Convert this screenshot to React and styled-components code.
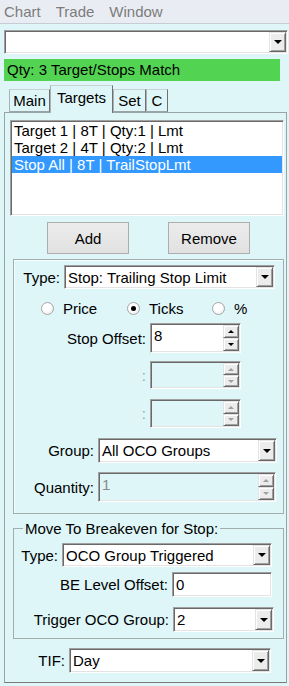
import React from "react";
import styled, { createGlobalStyle } from "styled-components";

const GlobalStyle = createGlobalStyle`
  html, body {
    margin: 0;
    padding: 0;
  }
  body {
    background: #def6f8;
    font-family: "Liberation Sans", Arial, sans-serif;
    font-size: 15px;
    color: #000;
  }
`;

const sunken = `
  border: 1px solid;
  border-color: #a0a0a0 #ffffff #ffffff #a0a0a0;
  box-shadow: inset 1px 1px #696969, inset -1px -1px #e3e3e3;
`;

const raised = `
  border: 1px solid;
  border-color: #e3e3e3 #696969 #696969 #e3e3e3;
  box-shadow: inset 1px 1px #ffffff, inset -1px -1px #a0a0a0;
`;

export default function App() {
  return (
    <Window>
      <GlobalStyle />
      <MenuBar>
        <span>Chart</span>
        <span>Trade</span>
        <span>Window</span>
      </MenuBar>

      <Body>
        <Combo w={284} h={24} value="" />
        <StatusBar>Qty: 3 Target/Stops Match</StatusBar>

        <TabStrip>
          <Tab $w={41}>Main</Tab>
          <Tab $w={63} $active>Targets</Tab>
          <Tab $w={33}>Set</Tab>
          <Tab $w={22}>C</Tab>
        </TabStrip>

        <TabPage>
          <ListBox>
            <ListItem>Target 1 | 8T | Qty:1 | Lmt</ListItem>
            <ListItem>Target 2 | 4T | Qty:2 | Lmt</ListItem>
            <ListItem $selected>Stop All | 8T | TrailStopLmt</ListItem>
          </ListBox>

          <ButtonRow>
            <Button>Add</Button>
            <Button>Remove</Button>
          </ButtonRow>

          <GroupBox>
            <Field $lw={46} $mt={5}>
              <Label>Type:</Label>
              <Combo w={211} h={24} value="Stop: Trailing Stop Limit" />
            </Field>

            <RadioRow>
              <RadioItem>
                <RadioDot />
                <span>Price</span>
              </RadioItem>
              <RadioItem>
                <RadioDot $on />
                <span>Ticks</span>
              </RadioItem>
              <RadioItem>
                <RadioDot />
                <span>%</span>
              </RadioItem>
            </RadioRow>

            <Field $lw={132} $mt={7}>
              <Label>Stop Offset:</Label>
              <Spin w={91} h={30} value="8" />
            </Field>
            <Field $lw={132} $mt={8}>
              <Label $disabled>:</Label>
              <Spin w={91} h={28} value="" disabled />
            </Field>
            <Field $lw={132} $mt={10}>
              <Label $disabled>:</Label>
              <Spin w={91} h={29} value="" disabled />
            </Field>
            <Field $lw={80} $mt={10}>
              <Label>Group:</Label>
              <Combo w={179} h={25} value="All OCO Groups" />
            </Field>
            <Field $lw={80} $mt={9}>
              <Label>Quantity:</Label>
              <Spin w={178} h={30} value="1" disabled />
            </Field>
          </GroupBox>

          <FieldSet>
            <Legend>Move To Breakeven for Stop:</Legend>
            <Field $lw={44} $mt={6}>
              <Label>Type:</Label>
              <Combo w={210} h={24} value="OCO Group Triggered" />
            </Field>
            <Field $lw={154} $mt={5}>
              <Label>BE Level Offset:</Label>
              <TextBox $w={100} $h={25}>0</TextBox>
            </Field>
            <Field $lw={155} $mt={10}>
              <Label>Trigger OCO Group:</Label>
              <Combo w={101} h={25} value="2" />
            </Field>
          </FieldSet>

          <Field $lw={60} $mt={9}>
            <Label>TIF:</Label>
            <Combo w={202} h={25} value="Day" />
          </Field>
        </TabPage>
      </Body>
    </Window>
  );
}

function Combo({ w, h, value }) {
  return (
    <ComboBox $w={w} $h={h}>
      <ComboText>{value}</ComboText>
      <DropButton>
        <Arrow />
      </DropButton>
    </ComboBox>
  );
}

function Spin({ w, h, value, disabled }) {
  return (
    <SpinBox $w={w} $h={h} $disabled={disabled}>
      <SpinText $disabled={disabled}>{value}</SpinText>
      <SpinButtons>
        <SpinHalf>
          <SmallArrow $up $disabled={disabled} />
        </SpinHalf>
        <SpinHalf>
          <SmallArrow $disabled={disabled} />
        </SpinHalf>
      </SpinButtons>
    </SpinBox>
  );
}

const Window = styled.div`
  width: 289px;
  height: 686px;
  overflow: hidden;
  background: #def6f8;
  display: flex;
  flex-direction: column;
`;

const MenuBar = styled.div`
  flex: none;
  height: 23px;
  display: flex;
  gap: 15px;
  padding-left: 4px;
  background: #e9edf3;
  border-bottom: 1px solid #c6ccd4;
  color: #7c7c7c;
  line-height: 23px;
`;

const Body = styled.div`
  display: flex;
  flex-direction: column;
  padding: 6px 1px 0 4px;
`;

const StatusBar = styled.div`
  width: 276px;
  height: 22px;
  margin-top: 5px;
  background: #52d452;
  line-height: 22px;
  padding-left: 3px;
  box-sizing: border-box;
`;

const TabStrip = styled.div`
  display: flex;
  align-items: flex-end;
  height: 27px;
  margin-top: 4px;
  padding-left: 5px;
`;

const Tab = styled.div`
  position: relative;
  z-index: ${(p) => (p.$active ? 1 : 0)};
  width: ${(p) => p.$w}px;
  height: ${(p) => (p.$active ? 28 : 23)}px;
  margin-bottom: ${(p) => (p.$active ? -1 : 0)}px;
  box-sizing: border-box;
  display: flex;
  align-items: center;
  justify-content: center;
  padding-bottom: ${(p) => (p.$active ? 4 : 0)}px;
  background: #def6f8;
  border: 1px solid #a9b3b5;
  border-right-color: #707070;
  border-bottom: ${(p) => (p.$active ? "none" : "1px solid #9aa4a6")};
  border-top-color: #c8d2d4;
`;

const TabPage = styled.div`
  width: 283px;
  box-sizing: border-box;
  border: 1px solid #9aa4a6;
  border-bottom-color: #7a7a7a;
  padding: 0 0 9px 0;
  display: flex;
  flex-direction: column;
`;

const ListBox = styled.div`
  width: 274px;
  height: 96px;
  margin: 7px 0 0 5px;
  box-sizing: border-box;
  background: #fff;
  padding: 1px;
  ${sunken}
`;

const ListItem = styled.div`
  height: 17px;
  line-height: 17px;
  padding-left: 2px;
  white-space: nowrap;
  background: ${(p) => (p.$selected ? "#3399ff" : "transparent")};
  color: ${(p) => (p.$selected ? "#fff" : "#000")};
`;

const ButtonRow = styled.div`
  display: flex;
  gap: 39px;
  margin-top: 6px;
  padding-left: 42px;
`;

const Button = styled.div`
  width: 82px;
  height: 32px;
  box-sizing: border-box;
  display: flex;
  align-items: center;
  justify-content: center;
  background: linear-gradient(#ececec, #e1e1e1);
  border: 1px solid #adadad;
`;

const GroupBox = styled.div`
  width: 271px;
  box-sizing: border-box;
  margin: 5px 0 0 8px;
  padding-bottom: 11px;
  border: 1px solid #a3adae;
  box-shadow: inset 1px 1px #f4ffff;
`;

const FieldSet = styled.fieldset`
  width: 271px;
  min-width: 0;
  box-sizing: border-box;
  margin: 6px 0 0 8px;
  padding: 0 0 6px 0;
  border: 1px solid #a3adae;
`;

const Legend = styled.legend`
  margin-left: 9px;
  padding: 0 2px;
  line-height: 17px;
`;

const Field = styled.div`
  display: grid;
  grid-template-columns: ${(p) => p.$lw}px auto;
  column-gap: 4px;
  align-items: center;
  justify-content: start;
  margin-top: ${(p) => p.$mt}px;
`;

const Label = styled.span`
  text-align: right;
  white-space: nowrap;
  color: ${(p) => (p.$disabled ? "#a0a0a0" : "#000")};
`;

const ComboBox = styled.div`
  width: ${(p) => p.$w}px;
  height: ${(p) => p.$h}px;
  box-sizing: border-box;
  display: flex;
  align-items: stretch;
  padding: 1px;
  background: #fff;
  ${sunken}
`;

const ComboText = styled.span`
  flex: 1;
  align-self: center;
  padding-left: 2px;
  white-space: nowrap;
  overflow: hidden;
`;

const DropButton = styled.span`
  flex: none;
  width: 17px;
  box-sizing: border-box;
  display: flex;
  align-items: center;
  justify-content: center;
  background: #ececec;
  ${raised}
`;

const Arrow = styled.span`
  width: 0;
  height: 0;
  border-left: 4px solid transparent;
  border-right: 4px solid transparent;
  border-top: 4px solid #000;
`;

const TextBox = styled.div`
  width: ${(p) => p.$w}px;
  height: ${(p) => p.$h}px;
  box-sizing: border-box;
  display: flex;
  align-items: center;
  padding-left: 3px;
  background: #fff;
  ${sunken}
`;

const SpinBox = styled.div`
  width: ${(p) => p.$w}px;
  height: ${(p) => p.$h}px;
  box-sizing: border-box;
  display: flex;
  padding: 1px;
  background: ${(p) => (p.$disabled ? "transparent" : "#fff")};
  ${sunken}
`;

const SpinText = styled.span`
  flex: 1;
  padding: 2px 0 0 2px;
  color: ${(p) => (p.$disabled ? "#8a8a8a" : "#000")};
`;

const SpinButtons = styled.div`
  flex: none;
  width: 16px;
  display: flex;
  flex-direction: column;
`;

const SpinHalf = styled.div`
  flex: 1;
  box-sizing: border-box;
  display: flex;
  align-items: center;
  justify-content: center;
  background: #ececec;
  ${raised}
`;

const SmallArrow = styled.span`
  width: 0;
  height: 0;
  border-left: 3px solid transparent;
  border-right: 3px solid transparent;
  ${(p) =>
    p.$up
      ? `border-bottom: 3px solid ${p.$disabled ? "#a0a0a0" : "#000"};`
      : `border-top: 3px solid ${p.$disabled ? "#a0a0a0" : "#000"};`}
`;

const RadioRow = styled.div`
  display: grid;
  grid-template-columns: 86px 85px auto;
  height: 16px;
  margin-top: 11px;
  padding-left: 27px;
  align-items: center;
`;

const RadioItem = styled.label`
  display: flex;
  align-items: center;
  gap: 9px;
`;

const RadioDot = styled.span`
  width: 13px;
  height: 13px;
  flex: none;
  box-sizing: border-box;
  border-radius: 50%;
  border: 1px solid #a6a6a6;
  background: radial-gradient(circle at 40% 40%, #ffffff 40%, #e2e2e2);
  display: flex;
  align-items: center;
  justify-content: center;

  &::after {
    content: "";
    display: ${(p) => (p.$on ? "block" : "none")};
    width: 5px;
    height: 5px;
    border-radius: 50%;
    background: #000;
  }
`;
